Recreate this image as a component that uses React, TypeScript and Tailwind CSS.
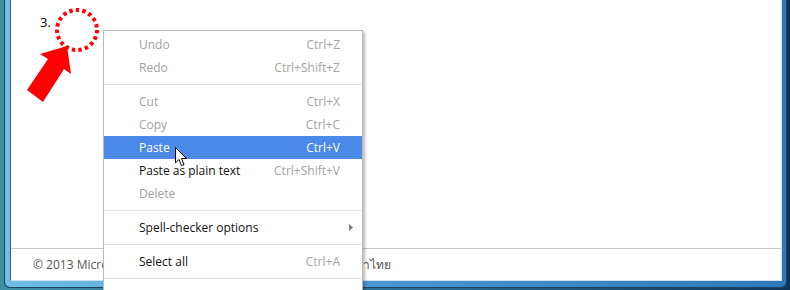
import React from 'react'

type Item =
    | { sep: true }
    | { label: string; sc?: string; disabled?: boolean; active?: boolean; sub?: boolean; sep?: false }

const items: Item[] = [
    { label: 'Undo', sc: 'Ctrl+Z', disabled: true },
    { label: 'Redo', sc: 'Ctrl+Shift+Z', disabled: true },
    { sep: true },
    { label: 'Cut', sc: 'Ctrl+X', disabled: true },
    { label: 'Copy', sc: 'Ctrl+C', disabled: true },
    { label: 'Paste', sc: 'Ctrl+V', active: true },
    { label: 'Paste as plain text', sc: 'Ctrl+Shift+V' },
    { label: 'Delete', disabled: true },
    { sep: true },
    { label: 'Spell-checker options', sub: true },
    { sep: true },
    { label: 'Select all', sc: 'Ctrl+A' },
    { sep: true },
]

function ContextMenu() {
    return (
        <div className="absolute left-[103px] top-[30px] h-[275px] w-[260px] border border-[#b9b9b9] bg-white pt-[2px] shadow-[2px_2px_3px_rgba(0,0,0,0.28)] font-['Open_Sans',sans-serif] text-[12px]">
            {items.map((it, i) => {
                if (it.sep) {
                    return (
                        <div key={i} className="py-[5px]">
                            <div className="h-px bg-[#e3e3e3]" />
                        </div>
                    )
                }
                return (
                    <div
                        key={i}
                        className={`relative flex h-[23px] items-center justify-between pl-[35px] pr-[22px] ${it.active ? 'bg-[#4a89e8] text-white' : it.disabled ? 'text-[#a3a3a3]' : 'text-[#111]'}`}
                    >
                        <span>{it.label}</span>
                        {it.sc && <span className={it.active ? 'text-white' : 'text-[#a3a3a3]'}>{it.sc}</span>}
                        {it.sub && (
                            <svg className="absolute right-[9px] top-[8px]" width="4" height="7" viewBox="0 0 4 7">
                                <path d="M0 0 L4 3.5 L0 7 Z" fill="#7a7a7a" />
                            </svg>
                        )}
                    </div>
                )
            })}
        </div>
    )
}

export default function App() {
    return (
        <div className="relative w-[790px] h-[290px] overflow-hidden bg-[linear-gradient(90deg,#3f8ea3,#2a6f98_50%,#0f3659)]">
            <div className="ml-[4px] mr-[3px] h-[288px] rounded-b-[6px] border-x border-b border-[#1c4262] bg-[linear-gradient(90deg,#72bde6,#4f9ad3_40%,#2f78b9)] pl-[5px] pr-[4px]">
                <div className="relative flex h-[281px] flex-col border-l border-r border-b border-l-[#2d5f86] border-r-[#cfe2f0] border-b-[#cfe2f0] bg-white">
                    {/* page body */}
                    <div className="relative h-[248px] pl-[29px] pt-[13px] font-['Open_Sans',sans-serif] text-[13px] text-black">
                        <span>3.</span>
                    </div>
                    <div className="h-px bg-[#cbcbcb]" />
                    <div className="flex h-[31px] items-center pl-[22px] font-['Open_Sans',sans-serif] text-[12px] text-[#555]">
                        <span>© 2013 Microsoft</span>
                        <span className="ml-[210px]">ภาษาไทย</span>
                    </div>

                    {/* annotation: circle + arrow */}
                    <svg className="absolute left-[-11px] top-0" width="120" height="110" viewBox="0 0 120 110">
                        <circle cx="77" cy="30" r="20" fill="none" stroke="#ff0000" strokeWidth="4" strokeDasharray="3.4 3.2" />
                        <polygon points="27,90 48,59 40,54 67,46 71,74 64,69 43,102" fill="#ff0000" />
                    </svg>
                </div>
            </div>

            <ContextMenu />

            {/* mouse cursor */}
            <svg className="absolute left-[175px] top-[147px]" width="13" height="20" viewBox="0 0 13 20">
                <path d="M0.5 0.5 L0.5 16 L4 12.5 L6.5 18.5 L9 17.5 L6.5 11.5 L11.5 11.5 Z" fill="#fff" stroke="#000" strokeWidth="1" strokeLinejoin="miter" />
            </svg>
        </div>
    )
}
